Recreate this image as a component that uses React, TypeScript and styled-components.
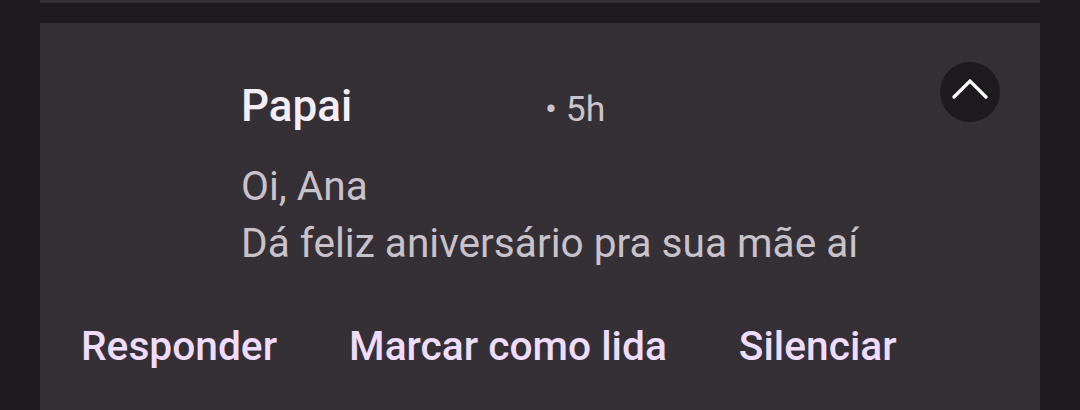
import React from "react";
import styled, { createGlobalStyle } from "styled-components";

const Global = createGlobalStyle`
  html, body { margin: 0; padding: 0; background: #1e1a1f; }
  body { font-family: Roboto, "Noto Sans", sans-serif; }
`;

const Page = styled.div`
  width: 1080px;
  height: 410px;
  background: #1e1a1f;
  padding: 0 40px;
  box-sizing: border-box;
  display: flex;
  flex-direction: column;
  gap: 20px;
  overflow: hidden;
`;

const PrevCard = styled.div`
  height: 3px;
  background: #353036;
`;

const Card = styled.div`
  flex: 1;
  background: #353036;
  display: flex;
  flex-direction: column;
`;

const Body = styled.div`
  display: flex;
  align-items: flex-start;
  padding: 39px 40px 0 201px;
`;

const Content = styled.div`
  flex: 1;
  display: flex;
  flex-direction: column;
  padding-top: 14px;
`;

const Header = styled.div`
  display: flex;
  align-items: baseline;
  margin-bottom: 19px;
`;

const Title = styled.span`
  font-size: 44px;
  font-weight: 500;
  color: #f6eef6;
  width: 304px;
  line-height: 60px;
`;

const Time = styled.span`
  font-size: 35.5px;
  line-height: 60px;
  color: #cbc4cc;
`;

const Message = styled.div`
  font-size: 40.6px;
  line-height: 57px;
  color: #c9c2ca;
`;

const ExpandButton = styled.button`
  width: 60px;
  height: 60px;
  border-radius: 50%;
  border: none;
  background: #1e1a1f;
  display: flex;
  align-items: center;
  justify-content: center;
  padding: 0 0 6px;
`;

const Actions = styled.div`
  display: flex;
  gap: 72px;
  padding: 45px 0 0 41px;
`;

const Action = styled.span`
  font-size: 40.7px;
  line-height: 58px;
  font-weight: 500;
  color: #efdcff;
`;

export default function App() {
  return (
    <>
      <Global />
      <Page>
        <PrevCard />
        <Card>
          <Body>
            <Content>
              <Header>
                <Title>Papai</Title>
                <Time>• 5h</Time>
              </Header>
              <Message>Oi, Ana</Message>
              <Message>Dá feliz aniversário pra sua mãe aí</Message>
            </Content>
            <ExpandButton aria-label="Recolher">
              <svg width="36" height="20" viewBox="0 0 36 20">
                <path d="M2 18 L18 2 L34 18" fill="none" stroke="#ffffff" strokeWidth="3.2" strokeLinecap="round" />
              </svg>
            </ExpandButton>
          </Body>
          <Actions>
            <Action>Responder</Action>
            <Action>Marcar como lida</Action>
            <Action>Silenciar</Action>
          </Actions>
        </Card>
      </Page>
    </>
  );
}
